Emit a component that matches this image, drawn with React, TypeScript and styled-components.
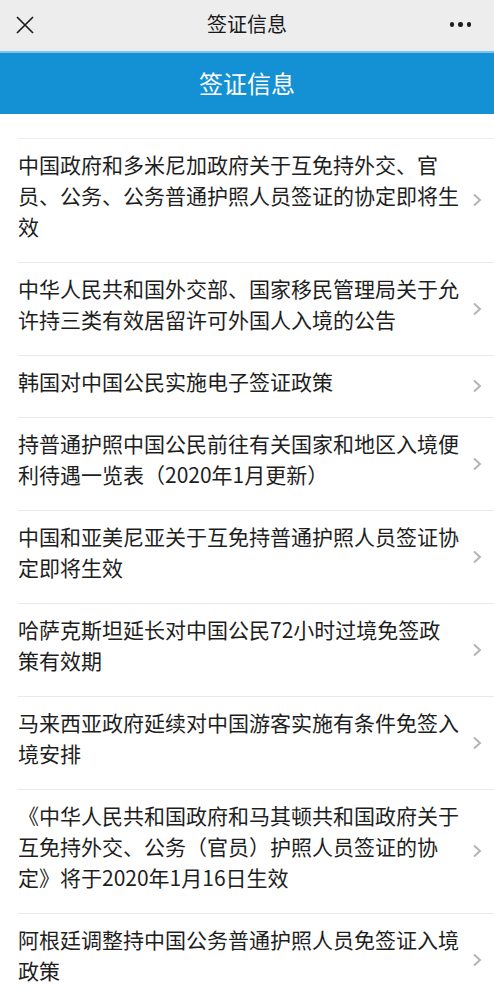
import React from 'react'
import styled, { createGlobalStyle } from 'styled-components'

const items: string[] = [
  '中国政府和多米尼加政府关于互免持外交、官员、公务、公务普通护照人员签证的协定即将生效',
  '中华人民共和国外交部、国家移民管理局关于允许持三类有效居留许可外国人入境的公告',
  '韩国对中国公民实施电子签证政策',
  '持普通护照中国公民前往有关国家和地区入境便利待遇一览表（2020年1月更新）',
  '中国和亚美尼亚关于互免持普通护照人员签证协定即将生效',
  '哈萨克斯坦延长对中国公民72小时过境免签政策有效期',
  '马来西亚政府延续对中国游客实施有条件免签入境安排',
  '《中华人民共和国政府和马其顿共和国政府关于互免持外交、公务（官员）护照人员签证的协定》将于2020年1月16日生效',
  '阿根廷调整持中国公务普通护照人员免签证入境政策',
]

const App: React.FC = () => {
  return (
    <Page>
      <GlobalStyle />
      <TopBar>
        <IconSlot>
          <svg width="18" height="18" viewBox="0 0 18 18">
            <path d="M1 1 L17 17 M17 1 L1 17" stroke="#1c1c1c" strokeWidth="1.7" fill="none" />
          </svg>
        </IconSlot>
        <TopTitle>签证信息</TopTitle>
        <IconSlot $right>
          <Dots>
            <Dot />
            <Dot />
            <Dot />
          </Dots>
        </IconSlot>
      </TopBar>

      <Banner>签证信息</Banner>

      <List>
        <ListHead />
        {items.map((text) => (
          <Row key={text}>
            <RowText>{text}</RowText>
            <Chevron>
              <svg width="10" height="14" viewBox="0 0 10 14">
                <path d="M2 1.5 L8 7 L2 12.5" stroke="#b4b4b4" strokeWidth="2" fill="none" />
              </svg>
            </Chevron>
          </Row>
        ))}
      </List>
    </Page>
  )
}

const GlobalStyle = createGlobalStyle`
  body {
    margin: 0;
    background: #ffffff;
    font-family: "Noto Sans CJK SC", "Noto Sans", sans-serif;
  }
`

const Page = styled.div`
  width: 494px;
  min-height: 1000px;
  background: #ffffff;
  overflow: hidden;
`

const TopBar = styled.div`
  height: 51px;
  background: #ededed;
  display: grid;
  grid-template-columns: 60px 1fr 60px;
  align-items: center;
`

const IconSlot = styled.div<{ $right?: boolean }>`
  display: flex;
  align-items: center;
  justify-content: ${(p) => (p.$right ? 'flex-end' : 'flex-start')};
  padding: ${(p) => (p.$right ? '0 23px 2px 0' : '0 0 2px 16px')};
`

const TopTitle = styled.div`
  text-align: center;
  font-size: 20px;
  color: #181818;
  line-height: 28px;
  margin-top: -3px;
`

const Dots = styled.div`
  display: flex;
  gap: 4px;
`

const Dot = styled.span`
  width: 4.5px;
  height: 4.5px;
  border-radius: 50%;
  background: #1c1c1c;
`

const Banner = styled.div`
  height: 63px;
  box-sizing: border-box;
  background: #1490d4;
  border-top: 2px solid #7cc6ec;
  color: #ffffff;
  font-size: 24px;
  display: flex;
  align-items: center;
  justify-content: center;
  padding-bottom: 2px;
`

const List = styled.div`
  padding-left: 18px;
`

const ListHead = styled.div`
  height: 24px;
  border-bottom: 1px solid #ededed;
`

const Row = styled.div`
  display: flex;
  align-items: center;
  padding: 10px 0 20px;
  border-bottom: 1px solid #e9e9e9;
`

const RowText = styled.div`
  width: 441px;
  flex: none;
  font-size: 21px;
  line-height: 31px;
  color: #1e1e1e;
`

const Chevron = styled.div`
  flex: 1;
  display: flex;
  justify-content: center;
  padding-top: 9px;
`

export default App
